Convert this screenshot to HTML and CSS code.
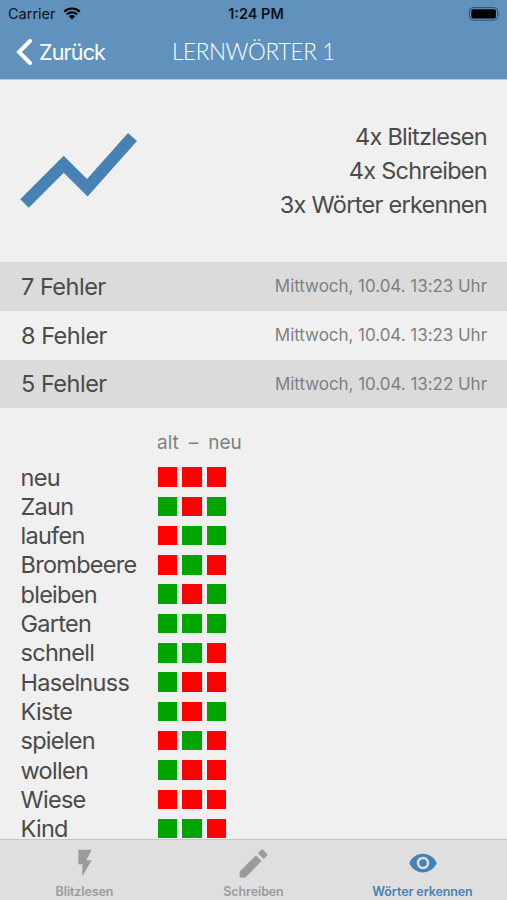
FILE: index.html
```
<!DOCTYPE html>
<html lang="de">
    <head>
        <meta charset="UTF-8">
        <title>Lernwörter 1</title>
        <meta name="viewport" content="width=device-width, initial-scale=1">
        <link rel="stylesheet" href="styles.css">
    </head>
    <body>
        <div class="header">
            <div class="status">
                <div class="carrier">
                    <span>Carrier</span>
                    <svg class="wifi" viewBox="0 0 18 13">
                        <path d="M1.2 4.6a11.3 11.3 0 0 1 15.6 0M3.8 7.4a7.5 7.5 0 0 1 10.4 0" fill="none" stroke="#000" stroke-width="2.2"/>
                        <path d="M9 12.6L5.8 9.3a4.6 4.6 0 0 1 6.4 0z"/>
                    </svg>
                </div>
                <div class="clock">1:24 PM</div>
                <svg class="battery" viewBox="0 0 32 14">
                    <rect x="0.6" y="0.6" width="28" height="12.6" rx="3.4" fill="none" stroke="#31506b" stroke-width="1"/>
                    <rect x="2.3" y="2.3" width="24.6" height="9.2" rx="1.8"/>
                    <path d="M29.8 4.8q1.8 2.1 0 4.2z" fill="#31506b"/>
                </svg>
            </div>
            <div class="nav">
                <div class="back">
                    <svg class="arrow" viewBox="0 0 16 26">
                        <path d="M14 2L3 13l11 11" fill="none" stroke="#fff" stroke-width="4" stroke-linecap="round"/>
                    </svg>
                    <span>Zurück</span>
                </div>
                <div class="title">LERNWÖRTER 1</div>
            </div>
        </div>
        <div class="content">
            <div class="summary">
                <svg class="chart" viewBox="0 0 118 78">
                    <path d="M4.500 71.500L43.700 32.200 67.300 55.800 112.500 5" fill="none" stroke="#4682b4" stroke-width="12"/>
                </svg>
                <div class="counts">
                    <div>4x Blitzlesen</div>
                    <div>4x Schreiben</div>
                    <div>3x Wörter erkennen</div>
                </div>
            </div>
            <div class="result dark"><span>7 Fehler</span><span class="date">Mittwoch, 10.04. 13:23 Uhr</span></div>
            <div class="result"><span>8 Fehler</span><span class="date">Mittwoch, 10.04. 13:23 Uhr</span></div>
            <div class="result dark"><span>5 Fehler</span><span class="date">Mittwoch, 10.04. 13:22 Uhr</span></div>
            <div class="legend"><span>alt</span><span>–</span><span>neu</span></div>
            <div class="words">
                <div class="word"><span>neu</span><i class="no"></i><i class="no"></i><i class="no"></i></div>
                <div class="word"><span>Zaun</span><i class="ok"></i><i class="no"></i><i class="ok"></i></div>
                <div class="word"><span>laufen</span><i class="no"></i><i class="ok"></i><i class="ok"></i></div>
                <div class="word"><span>Brombeere</span><i class="no"></i><i class="ok"></i><i class="no"></i></div>
                <div class="word"><span>bleiben</span><i class="ok"></i><i class="no"></i><i class="ok"></i></div>
                <div class="word"><span>Garten</span><i class="ok"></i><i class="ok"></i><i class="ok"></i></div>
                <div class="word"><span>schnell</span><i class="ok"></i><i class="ok"></i><i class="no"></i></div>
                <div class="word"><span>Haselnuss</span><i class="ok"></i><i class="no"></i><i class="no"></i></div>
                <div class="word"><span>Kiste</span><i class="ok"></i><i class="no"></i><i class="ok"></i></div>
                <div class="word"><span>spielen</span><i class="no"></i><i class="ok"></i><i class="no"></i></div>
                <div class="word"><span>wollen</span><i class="ok"></i><i class="no"></i><i class="no"></i></div>
                <div class="word"><span>Wiese</span><i class="no"></i><i class="no"></i><i class="no"></i></div>
                <div class="word"><span>Kind</span><i class="ok"></i><i class="ok"></i><i class="no"></i></div>
            </div>
        </div>
        <div class="tabs">
            <div class="tab">
                <svg viewBox="0 0 24 24"><path d="M7 2v11h3v9l7-12h-4l4-8z"/></svg>
                <span>Blitzlesen</span>
            </div>
            <div class="tab">
                <svg class="pencil" viewBox="0 0 24 24"><path d="M3 17.250V21h3.750L17.300 10.450l-3.750-3.750L3 17.250zM20.710 7.040a1 1 0 0 0 0-1.410l-2.340-2.340a1 1 0 0 0-1.410 0l-2.100 2.100 3.750 3.750 2.100-2.100z"/></svg>
                <span>Schreiben</span>
            </div>
            <div class="tab active">
                <svg class="eye" viewBox="0 0 24 24"><path d="M12 4.500C7 4.500 2.730 7.610 1 12c1.730 4.390 6 7.500 11 7.500s9.270-3.110 11-7.500c-1.730-4.390-6-7.500-11-7.500zM12 17a5 5 0 1 1 0-10 5 5 0 0 1 0 10zm0-8a3 3 0 1 0 0 6 3 3 0 0 0 0-6z"/></svg>
                <span>Wörter erkennen</span>
            </div>
        </div>
    </body>
</html>
```
FILE: styles.css
```
body{
    margin: 0;
    height: 900px;
    display: flex;
    flex-direction: column;
    overflow: hidden;
    background: #f0f0f0;
    color: #4a4a4a;
    font-family: Inter, "Liberation Sans", sans-serif;
    font-size: 23.5px;
}
svg{
    display: block;
}
.header{
    height: 78.5px;
    flex: none;
    background: #6192bd;
    border-bottom: 1px solid #b3c8da;
}
.status{
    height: 27px;
    display: grid;
    grid-template-columns: 1fr auto 1fr;
    align-items: center;
    padding: 0 6px 0 8px;
    font-size: 14.5px;
    color: #0b1219;
}
.carrier{
    display: flex;
    align-items: center;
    gap: 7px;
}
.wifi{
    width: 18px;
    height: 13px;
}
.clock{
    padding-left: 3px;
    font-weight: 600;
}
.battery{
    width: 32px;
    height: 14px;
    justify-self: end;
}
.nav{
    height: 50px;
    display: grid;
    grid-template-columns: 1fr auto 1fr;
    align-items: center;
    color: #fff;
}
.back{
    display: flex;
    align-items: center;
    gap: 7px;
    padding-left: 16px;
    font-size: 21.5px;
    letter-spacing: -0.85px;
}
.arrow{
    width: 16px;
    height: 26px;
}
.title{
    padding-bottom: 2px;
    font-family: Lato, sans-serif;
    font-weight: 300;
    font-size: 22.5px;
    letter-spacing: -0.4px;
}
.content{
    flex: 1;
    min-height: 0;
    overflow: hidden;
}
.summary{
    height: 182.5px;
    display: flex;
    align-items: center;
    justify-content: space-between;
    padding: 1px 20px 0;
    box-sizing: border-box;
}
.chart{
    width: 118px;
    height: 78px;
}
.counts{
    text-align: right;
    line-height: 34.3px;
    letter-spacing: -0.72px;
}
.result{
    height: 48.8px;
    display: flex;
    align-items: center;
    justify-content: space-between;
    padding: 0 20px 0 21px;
    letter-spacing: -0.5px;
}
.dark{
    background: #dbdbdb;
}
.date{
    font-size: 17px;
    letter-spacing: -0.04px;
    color: #808080;
}
.legend{
    display: flex;
    gap: 10px;
    padding: 23px 0 0 157px;
    font-size: 19px;
    line-height: 24px;
    color: #808080;
}
.words{
    padding: 7px 0 0 20.5px;
}
.word{
    height: 29.3px;
    display: grid;
    grid-template-columns: 132.5px 19.5px 19.5px 19.5px;
    column-gap: 4.9px;
    align-items: center;
    line-height: 29px;
    letter-spacing: -0.72px;
}
.word i{
    height: 19.5px;
}
.ok{
    background: #00a500;
}
.no{
    background: #ff0000;
}
.tabs{
    height: 60px;
    flex: none;
    display: flex;
    border-top: 1px solid #c6c6c6;
    background: #dfdfdf;
}
.tab{
    flex: 1;
    display: flex;
    flex-direction: column;
    align-items: center;
    color: #9b9b9b;
    font-size: 12.5px;
    font-weight: 600;
    letter-spacing: -0.1px;
}
.tab svg{
    width: 32px;
    height: 32px;
    margin: 7px 0 5px;
    fill: #9b9b9b;
}
.tab .pencil{
    width: 37px;
    height: 37px;
    margin: 5px 0 2px;
}
.tab .eye{
    width: 30px;
    height: 30px;
    margin: 8px 0 6px;
    fill: #4682b4;
}
.active{
    color: #4682b4;
}
```
